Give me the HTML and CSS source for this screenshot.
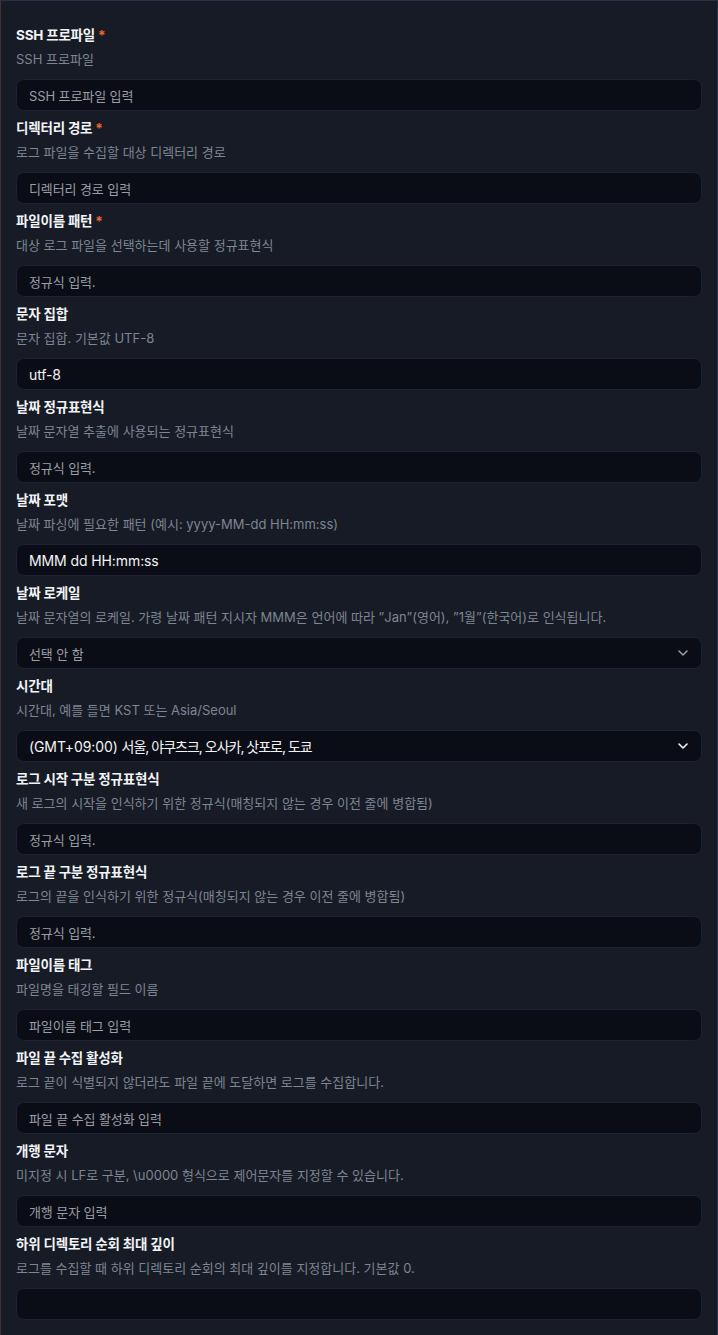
FILE: index.html
```html
<!DOCTYPE html>
<html lang="ko">
<head>
<meta charset="utf-8">
<link rel="stylesheet" href="styles.css">
</head>
<body>
<div class="panel">
  <div class="field">
    <div class="label">SSH 프로파일<span class="req">*</span></div>
    <div class="desc">SSH 프로파일</div>
    <div class="input placeholder">SSH 프로파일 입력</div>
  </div>
  <div class="field">
    <div class="label">디렉터리 경로<span class="req">*</span></div>
    <div class="desc">로그 파일을 수집할 대상 디렉터리 경로</div>
    <div class="input placeholder">디렉터리 경로 입력</div>
  </div>
  <div class="field">
    <div class="label">파일이름 패턴<span class="req">*</span></div>
    <div class="desc">대상 로그 파일을 선택하는데 사용할 정규표현식</div>
    <div class="input placeholder">정규식 입력.</div>
  </div>
  <div class="field">
    <div class="label">문자 집합</div>
    <div class="desc">문자 집합. 기본값 UTF-8</div>
    <div class="input value">utf-8</div>
  </div>
  <div class="field">
    <div class="label">날짜 정규표현식</div>
    <div class="desc">날짜 문자열 추출에 사용되는 정규표현식</div>
    <div class="input placeholder">정규식 입력.</div>
  </div>
  <div class="field">
    <div class="label">날짜 포맷</div>
    <div class="desc">날짜 파싱에 필요한 패턴 (예시: yyyy-MM-dd HH:mm:ss)</div>
    <div class="input value">MMM dd HH:mm:ss</div>
  </div>
  <div class="field">
    <div class="label">날짜 로케일</div>
    <div class="desc">날짜 문자열의 로케일. 가령 날짜 패턴 지시자 MMM은 언어에 따라 ”Jan”(영어), ”1월”(한국어)로 인식됩니다.</div>
    <div class="input select placeholder"><span>선택 안 함</span><svg class="chev dim" width="10" height="6" viewBox="0 0 10 6"><path d="M1 1l4 4 4-4" fill="none" stroke="currentColor" stroke-width="1.5" stroke-linecap="round" stroke-linejoin="round"/></svg></div>
  </div>
  <div class="field">
    <div class="label">시간대</div>
    <div class="desc">시간대, 예를 들면 KST 또는 Asia/Seoul</div>
    <div class="input select value"><span>(GMT+09:00) <span class="ko">서울, 야쿠츠크, 오사카, 삿포로, 도쿄</span></span><svg class="chev" width="10" height="6" viewBox="0 0 10 6"><path d="M1 1l4 4 4-4" fill="none" stroke="currentColor" stroke-width="1.6" stroke-linecap="round" stroke-linejoin="round"/></svg></div>
  </div>
  <div class="field">
    <div class="label">로그 시작 구분 정규표현식</div>
    <div class="desc">새 로그의 시작을 인식하기 위한 정규식(매칭되지 않는 경우 이전 줄에 병합됨)</div>
    <div class="input placeholder">정규식 입력.</div>
  </div>
  <div class="field">
    <div class="label">로그 끝 구분 정규표현식</div>
    <div class="desc">로그의 끝을 인식하기 위한 정규식(매칭되지 않는 경우 이전 줄에 병합됨)</div>
    <div class="input placeholder">정규식 입력.</div>
  </div>
  <div class="field">
    <div class="label">파일이름 태그</div>
    <div class="desc">파일명을 태깅할 필드 이름</div>
    <div class="input placeholder">파일이름 태그 입력</div>
  </div>
  <div class="field">
    <div class="label">파일 끝 수집 활성화</div>
    <div class="desc">로그 끝이 식별되지 않더라도 파일 끝에 도달하면 로그를 수집합니다.</div>
    <div class="input placeholder">파일 끝 수집 활성화 입력</div>
  </div>
  <div class="field">
    <div class="label">개행 문자</div>
    <div class="desc">미지정 시 LF로 구분, \u0000 형식으로 제어문자를 지정할 수 있습니다.</div>
    <div class="input placeholder">개행 문자 입력</div>
  </div>
  <div class="field">
    <div class="label">하위 디렉토리 순회 최대 깊이</div>
    <div class="desc">로그를 수집할 때 하위 디렉토리 순회의 최대 깊이를 지정합니다. 기본값 0.</div>
    <div class="input placeholder"></div>
  </div>
</div>
</body>
</html>
```

FILE: styles.css
```css
html, body {
  margin: 0;
  padding: 0;
  background: #161b26;
}
body {
  font-family: Inter, "Noto Sans CJK KR", sans-serif;
  color: #f1f3f6;
  height: 1335px;
  box-sizing: border-box;
  border-top: 1px solid #2b3244;
  border-left: 1px solid #4a2c34;
  border-right: 1px solid #2b3244;
  overflow: hidden;
}
.panel {
  display: flex;
  flex-direction: column;
  gap: 7px;
  padding: 24px 15px 0 15px;
}
.field {
  display: flex;
  flex-direction: column;
}
.label {
  font-size: 13.5px;
  font-weight: 700;
  line-height: 20px;
  letter-spacing: -0.2px;
  color: #f3f4f7;
}
.req {
  color: #f0652a;
  margin-left: 3px;
}
.desc {
  font-size: 13px;
  line-height: 20px;
  margin-top: 4px;
  color: #7f8591;
  letter-spacing: 0;
  white-space: nowrap;
}
.input {
  margin-top: 10px;
  height: 32px;
  box-sizing: border-box;
  background: #0a0d15;
  border: 1px solid #1c2232;
  border-radius: 8px;
  padding: 0 12px;
  display: flex;
  align-items: center;
  font-size: 13px;
  letter-spacing: -0.1px;
}
.placeholder {
  color: #9a9ea6;
}
.value {
  color: #f3f4f7;
  font-size: 14px;
}
.ko {
  letter-spacing: -1px;
}
.select {
  justify-content: space-between;
}
.chev {
  margin-right: 1px;
  color: #f3f4f7;
}
.chev.dim {
  color: #9a9ea6;
}
```
